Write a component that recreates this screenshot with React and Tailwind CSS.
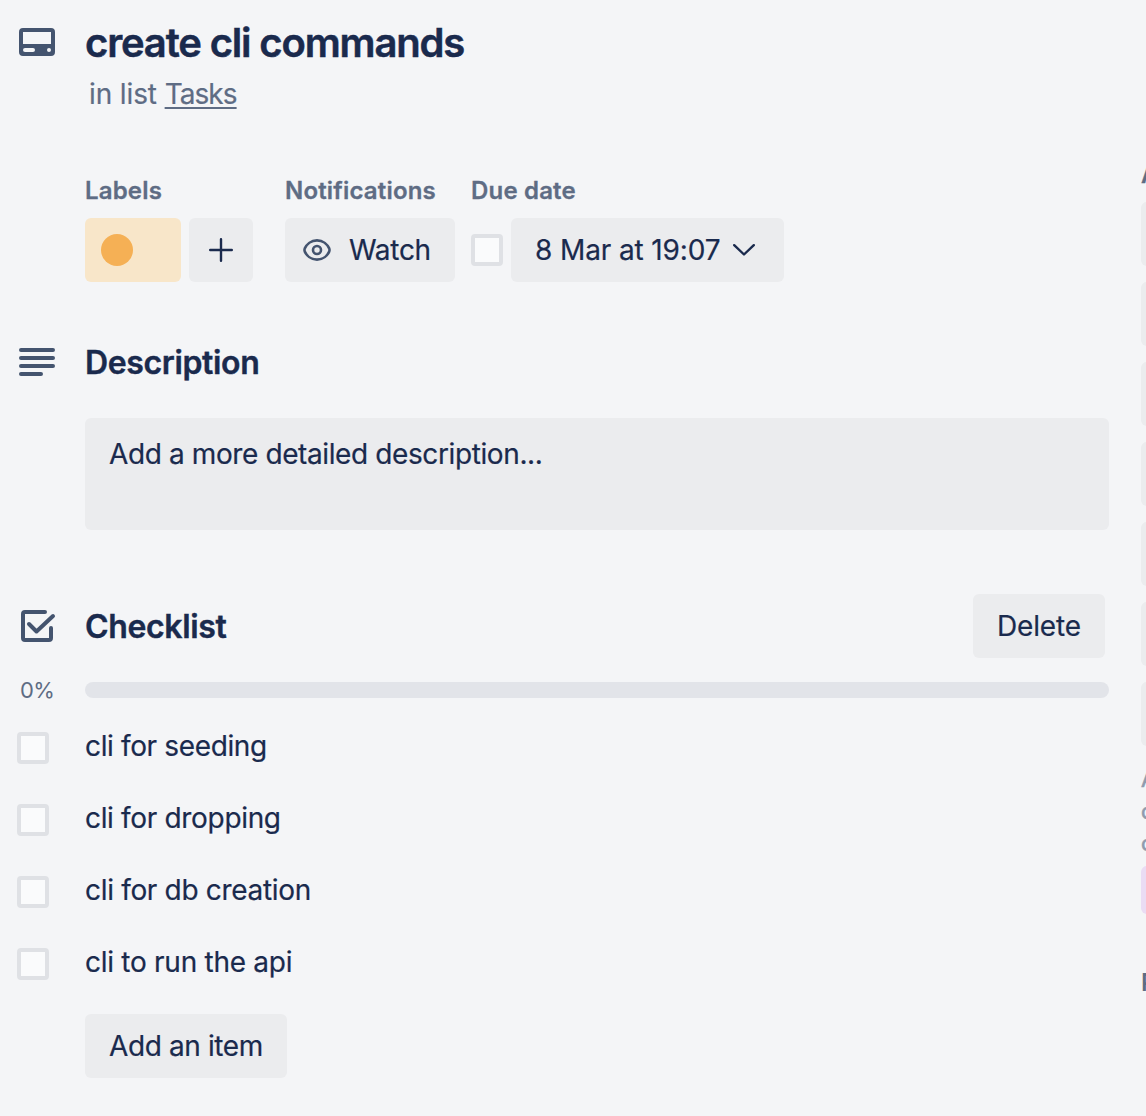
import React from "react";

const labelCls = "relative top-px text-[24px] leading-[24px] font-semibold text-[#5e6c84] whitespace-nowrap tracking-[0.18px] [-webkit-text-stroke:0.3px]";
const bodyCls = "text-[28px] leading-[40px] whitespace-nowrap [-webkit-text-stroke:0.2px]";
const headingCls = "text-[32px] leading-[34px] font-semibold tracking-[-0.36px] [-webkit-text-stroke:0.4px]";
const buttonCls = "h-16 rounded-md bg-[#ebecee] pl-6 text-left text-[28px] [-webkit-text-stroke:0.2px]";

function Checkbox() {
  return <span className="block size-8 shrink-0 rounded-[4px] border-4 border-[#dfe1e5] bg-[#fafbfc]" />;
}

function CardIcon() {
  return (
    <svg className="mt-[28px] ml-[19px] h-[28px] w-[36px]" viewBox="0 0 36 28">
      <path
        fill="#44546f"
        fillRule="evenodd"
        d="M4 0H32A4 4 0 0 1 36 4V24A4 4 0 0 1 32 28H4A4 4 0 0 1 0 24V4A4 4 0 0 1 4 0ZM4 4V16H32V4ZM6 20A2 2 0 0 0 6 24H14A2 2 0 0 0 14 20ZM30 20A2 2 0 0 0 30 24A2 2 0 0 0 30 20Z"
      />
    </svg>
  );
}

function DescriptionIcon() {
  return (
    <svg className="ml-[19px] h-[28px] w-[36px]" viewBox="0 0 36 28" stroke="#44546f" strokeWidth="4" strokeLinecap="round">
      <path d="M2 2H34M2 10H34M2 18H34M2 26H22" />
    </svg>
  );
}

function ChecklistIcon() {
  return (
    <svg className="ml-[19px] h-[36px] w-[38px]" viewBox="0 0 38 36" fill="none" stroke="#44546f" strokeWidth="4" strokeLinecap="round" strokeLinejoin="round">
      <path d="M26 4H6A2 2 0 0 0 4 6V30A2 2 0 0 0 6 32H30A2 2 0 0 0 32 30V20" />
      <path d="M10 16L17.5 23.5L34 8" />
    </svg>
  );
}

function EyeIcon() {
  return (
    <svg className="h-[24px] w-[28px] shrink-0" viewBox="0 0 28 24" fill="none" stroke="#44546f">
      <path strokeWidth="2.6" d="M14 2.4C7.8 2.4 3.5 6.6 1.8 10.4Q1.2 12 1.8 13.6C3.5 17.4 7.8 21.6 14 21.6S24.5 17.4 26.2 13.6Q26.8 12 26.2 10.4C24.5 6.6 20.2 2.4 14 2.4Z" />
      <circle cx="14" cy="12" r="4" strokeWidth="2.6" />
    </svg>
  );
}

const items = [
  { text: "cli for seeding", tracking: "tracking-[-0.36px]" },
  { text: "cli for dropping", tracking: "tracking-[-0.33px]" },
  { text: "cli for db creation", tracking: "tracking-[-0.32px]" },
  { text: "cli to run the api", tracking: "tracking-[-0.27px]" },
];

const sideButtons = [0, 1, 2, 3, 4, 5, 6];

export default function App() {
  return (
    <div className="flex h-[1116px] w-[1146px] overflow-hidden bg-[#f4f5f7] font-['Inter',sans-serif] text-[#1a2a4d]">
      <main className="w-[1141px] shrink-0">
        <header className="flex h-[178px]">
          <div className="w-[85px] shrink-0"><CardIcon /></div>
          <div>
            <h1 className="mt-[19px] text-[40px] leading-[48px] font-semibold whitespace-nowrap tracking-[-1.16px] [-webkit-text-stroke:0.5px]">create cli commands</h1>
            <p className="mt-[7px] ml-1 text-[28px] leading-[40px] tracking-[-0.12px] text-[#5e6c84] [-webkit-text-stroke:0.2px]">in list <a className="tracking-[-0.94px] underline decoration-2 underline-offset-[3px]">Tasks</a></p>
          </div>
        </header>
        <section className="ml-[85px] flex h-[168px]">
          <div className="w-[200px]">
            <h3 className={labelCls}>Labels</h3>
            <div className="mt-4 flex gap-2">
              <div className="flex h-16 w-24 items-center rounded-md bg-[#f8e6c9] pl-4"><span className="size-8 rounded-full bg-[#f5b055]" /></div>
              <div className="flex size-16 items-center justify-center rounded-md bg-[#ebecee]">
                <svg className="size-6" viewBox="0 0 24 24" stroke="#1a2a4d" strokeWidth="2.4" strokeLinecap="round"><path d="M12 1.2V22.8M1.2 12H22.8" /></svg>
              </div>
            </div>
          </div>
          <div className="w-[186px]">
            <h3 className={labelCls}>Notifications</h3>
            <div className="mt-4 flex h-16 w-[170px] items-center rounded-md bg-[#ebecee] pl-[18px]">
              <EyeIcon /><span className={bodyCls + " ml-[18px] tracking-[-0.3px]"}>Watch</span>
            </div>
          </div>
          <div>
            <h3 className={labelCls}>Due date</h3>
            <div className="mt-4 flex items-center gap-2">
              <Checkbox />
              <div className="flex h-16 w-[273px] items-center rounded-md bg-[#ebecee] pl-6">
                <span className={bodyCls + " w-[198px] tracking-[-0.12px]"}>8 Mar at 19:07</span>
                <svg className="h-3 w-[22px]" viewBox="0 0 22 12" fill="none" stroke="#1a2a4d" strokeWidth="2.4" strokeLinecap="round" strokeLinejoin="round"><path d="M1.2 1.2L11 10.5L20.8 1.2" /></svg>
              </div>
            </div>
          </div>
        </section>
        <section className="h-[248px]">
          <div className="flex h-[72px] items-start">
            <div className="w-[85px] shrink-0 pt-[2px]"><DescriptionIcon /></div>
            <h2 className={headingCls}>Description</h2>
          </div>
          <div className="ml-[85px] h-28 w-[1024px] rounded-md bg-[#ebecee] px-6 py-4"><p className={bodyCls + " tracking-[-0.39px]"}>Add a more detailed description...</p></div>
        </section>
        <section>
          <div className="flex h-16 items-center">
            <div className="w-[85px] shrink-0"><ChecklistIcon /></div>
            <h2 className={headingCls + " pt-0.5"}>Checklist</h2>
            <button className={buttonCls + " ml-auto mr-9 w-[132px] tracking-[-0.15px]"}>Delete</button>
          </div>
          <div className="mt-5 flex h-6 items-center">
            <span className="w-[85px] shrink-0 pl-5 text-[22px] leading-6 tracking-[-0.7px] text-[#5e6c84]">0%</span>
            <div className="h-4 w-[1024px] rounded-full bg-[#e2e4e9]" />
          </div>
          <ul className="mt-[10px]">
            {items.map((item) => (
              <li key={item.text} className="flex h-[72px] items-start pl-[17px]">
                <div className="w-[68px] shrink-0 pt-5"><Checkbox /></div>
                <span className={bodyCls + " pt-[14px] " + item.tracking}>{item.text}</span>
              </li>
            ))}
          </ul>
          <button className={buttonCls + " mt-[14px] ml-[85px] w-[202px] tracking-[-0.38px]"}>Add an item</button>
        </section>
      </main>
      <aside className="w-[120px] shrink-0 pt-[162px]">
        <h3 className={labelCls}>A</h3>
        <div className="mt-4 flex flex-col gap-4">
          {sideButtons.map((n) => <div key={n} className="h-16 rounded-md bg-[#ebecee]" />)}
        </div>
        <p className="mt-[17px] text-[22px] leading-8 text-[#8f9bae] [-webkit-text-stroke:0.6px]">A<br />d<br />c</p>
        <div className="mt-[7px] h-12 rounded-md bg-[#eadcf4]" />
        <h3 className="mt-[57px] text-[24px] leading-[24px] font-semibold text-[#5e6c84]">P</h3>
      </aside>
    </div>
  );
}
